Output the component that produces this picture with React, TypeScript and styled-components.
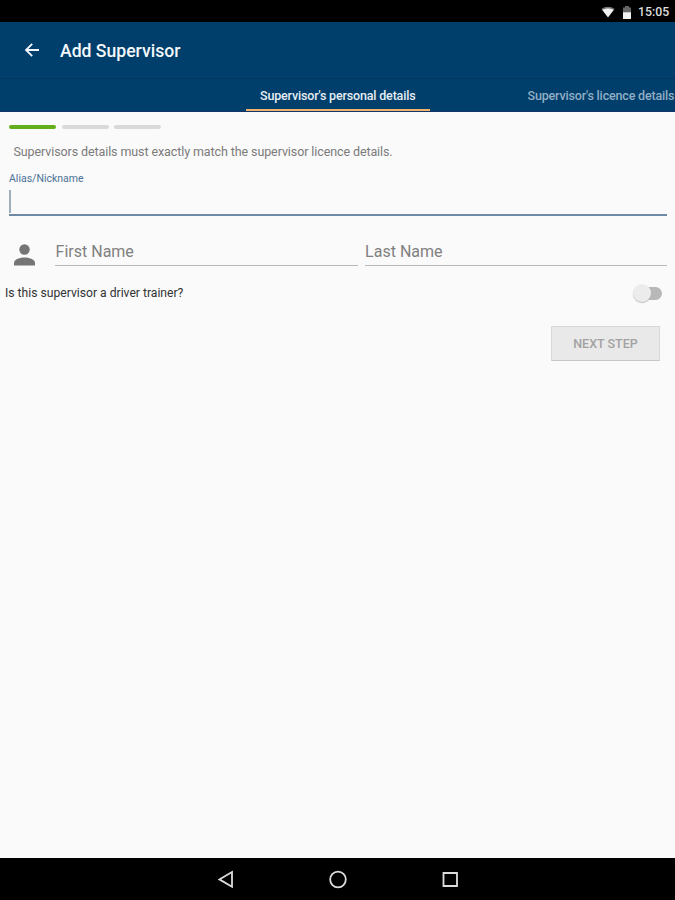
import React from "react";
import styled, { createGlobalStyle } from "styled-components";

const GlobalStyle = createGlobalStyle`
  * { box-sizing: border-box; }
  html, body { margin: 0; padding: 0; background: #fafafa; }
  body { font-family: Roboto, "Liberation Sans", sans-serif; overflow: hidden; }
`;

const Screen = styled.div`
  display: flex;
  flex-direction: column;
  width: 675px;
  height: 900px;
  overflow: hidden;
  background: #fafafa;
`;

const StatusBar = styled.header`
  display: flex;
  align-items: center;
  justify-content: flex-end;
  flex: none;
  height: 22px;
  padding: 2px 6px 0 0;
  background: #000;
  color: #dedede;
`;

const WifiIcon = styled.svg`
  width: 14px;
  height: 12px;
  margin-right: 7px;
`;

const BatteryIcon = styled.svg`
  width: 10px;
  height: 13px;
  margin-right: 6px;
`;

const Clock = styled.span`
  width: 31px;
  font-size: 12.3px;
  font-weight: 500;
  line-height: 20px;
  white-space: nowrap;
`;

const Toolbar = styled.div`
  display: flex;
  align-items: center;
  flex: none;
  height: 57px;
  padding-left: 22px;
  background: #003e6b;
  border-bottom: 1px solid #00365e;
`;

const BackButton = styled.button`
  display: flex;
  width: 20px;
  height: 20px;
  margin-right: 18px;
  padding: 0;
  border: 0;
  background: none;
`;

const Title = styled.h1`
  margin: 2px 0 0;
  color: #f4f8fb;
  font-size: 17.6px;
  font-weight: 500;
  line-height: 24px;
  white-space: nowrap;
`;

const TabBar = styled.nav`
  display: flex;
  flex: none;
  height: 33px;
  padding-left: 246px;
  overflow: hidden;
  background: #003e6b;
  border-bottom: 1px solid #12346b;
`;

const Tab = styled.div<{ $active?: boolean }>`
  flex: none;
  width: ${(p) => (p.$active ? 184 : 162)}px;
  height: 32px;
  margin-right: ${(p) => (p.$active ? 83.5 : 0)}px;
  padding: 8px 0 0 14px;
  border-bottom: ${(p) => (p.$active ? "2px solid #f0b56c" : "0")};
  color: ${(p) => (p.$active ? "#e6edf4" : "#91aec5")};
  font-size: 12.5px;
  font-weight: 500;
  line-height: 18px;
  letter-spacing: -0.17px;
  white-space: nowrap;
`;

const Form = styled.main`
  display: flex;
  flex-direction: column;
  flex: 1;
  padding: 13px 8px 0 9px;
`;

const Steps = styled.div`
  display: flex;
  gap: 5.5px;
`;

const Step = styled.div<{ $done?: boolean }>`
  width: 47px;
  height: 4px;
  border-radius: 2px;
  background: ${(p) => (p.$done ? "#62ae1b" : "#d9d9d9")};
`;

const Hint = styled.p`
  margin: 14px 0 0 4.5px;
  color: #7b7b7b;
  font-size: 12.5px;
  line-height: 18px;
  letter-spacing: -0.1px;
  white-space: nowrap;
`;

const FieldLabel = styled.label`
  margin-top: 11px;
  color: #4b7196;
  font-size: 10.5px;
  line-height: 14px;
`;

const FocusedField = styled.div`
  height: 30px;
  padding-top: 4px;
  border-bottom: 2px solid #6f89a5;
`;

const Caret = styled.div`
  width: 2px;
  height: 23px;
  background: #a0adbb;
`;

const NameRow = styled.div`
  display: flex;
  gap: 7px;
  height: 50px;
`;

const PersonIcon = styled.svg`
  flex: none;
  width: 32px;
  height: 32px;
  margin: 22px 7px 0 0;
`;

const NameField = styled.div`
  flex: 1;
  height: 50px;
  padding: 24px 0 0 0.6px;
  border-bottom: 1px solid #b9b9b9;
  color: #808080;
  font-size: 16px;
  line-height: 24px;
  white-space: nowrap;
`;

const TrainerRow = styled.div`
  display: flex;
  align-items: center;
  justify-content: space-between;
  height: 20px;
  margin: 17px 5px 0 -4px;
  color: #333;
  font-size: 12.15px;
  line-height: 16px;
  white-space: nowrap;
`;

const Switch = styled.div`
  display: flex;
  align-items: center;
  width: 26px;
  height: 13px;
  border-radius: 7px;
  background: #b8b8b8;
`;

const Thumb = styled.div`
  width: 18px;
  height: 18px;
  margin-left: -3px;
  border-radius: 50%;
  background: #ececec;
  box-shadow: 0 1px 1px #bcbcbc;
`;

const NextButton = styled.button`
  align-self: flex-end;
  width: 109px;
  height: 35px;
  margin: 23px 7px 0 0;
  padding: 1px 0 0;
  border: 1px solid #d8d8d8;
  border-bottom-color: #c6c6c6;
  border-radius: 1px;
  background: #e9e9e9;
  color: #a2a2a2;
  font: 500 12.5px/18px Roboto, "Liberation Sans", sans-serif;
  white-space: nowrap;
`;

const NavigationBar = styled.footer`
  display: flex;
  align-items: center;
  justify-content: center;
  gap: 92px;
  flex: none;
  height: 42px;
  background: #000;
`;

const NavIcon = styled.svg`
  width: 20px;
  height: 20px;
  fill: none;
  stroke: #dcdcdc;
  stroke-width: 1.8;
`;

export default function App() {
  return (
    <>
      <GlobalStyle />
      <Screen>
        <StatusBar>
          <WifiIcon viewBox="0 0 14 12">
            <path d="M.4 3.1C4.3.1 9.7.1 13.6 3.1L7 11.5Z" fill="#777" />
            <path d="M1.4 4.1C4.7 2.1 9.3 2.1 12.6 4.1L7 11.2Z" fill="#f2f2f2" />
          </WifiIcon>
          <BatteryIcon viewBox="0 0 10 13">
            <path d="M3 0h4v1.4h2V13H1V1.4h2Z" fill="#666" />
            <path d="M1 6.3h8V13H1Z" fill="#f2f2f2" />
          </BatteryIcon>
          <Clock>15:05</Clock>
        </StatusBar>
        <Toolbar>
          <BackButton aria-label="Back">
            <svg width="20" height="20" viewBox="0 0 20 20" fill="none" stroke="#f2f6fa" strokeWidth="1.8">
              <path d="M17 10H4.5M10.2 3.8 4 10l6.2 6.2" />
            </svg>
          </BackButton>
          <Title>Add Supervisor</Title>
        </Toolbar>
        <TabBar>
          <Tab $active>Supervisor's personal details</Tab>
          <Tab>Supervisor's licence details</Tab>
        </TabBar>
        <Form>
          <Steps>
            <Step $done />
            <Step />
            <Step />
          </Steps>
          <Hint>Supervisors details must exactly match the supervisor licence details.</Hint>
          <FieldLabel>Alias/Nickname</FieldLabel>
          <FocusedField>
            <Caret />
          </FocusedField>
          <NameRow>
            <PersonIcon viewBox="0 0 32 32" fill="#757575">
              <circle cx="15.5" cy="11.5" r="5.2" />
              <path d="M5 27.5v-2.8c0-3.3 6.5-5.2 10.5-5.2S26 21.4 26 24.7v2.8Z" />
            </PersonIcon>
            <NameField>First Name</NameField>
            <NameField>Last Name</NameField>
          </NameRow>
          <TrainerRow>
            <span>Is this supervisor a driver trainer?</span>
            <Switch role="switch" aria-checked="false">
              <Thumb />
            </Switch>
          </TrainerRow>
          <NextButton disabled>NEXT STEP</NextButton>
        </Form>
        <NavigationBar>
          <NavIcon viewBox="0 0 20 20">
            <path d="M16 3v14.800L3.400 10.400Z" />
          </NavIcon>
          <NavIcon viewBox="0 0 20 20">
            <circle cx="10" cy="10.5" r="7.8" />
          </NavIcon>
          <NavIcon viewBox="0 0 20 20">
            <path d="M3.500 4h13.500v13H3.500Z" />
          </NavIcon>
        </NavigationBar>
      </Screen>
    </>
  );
}
